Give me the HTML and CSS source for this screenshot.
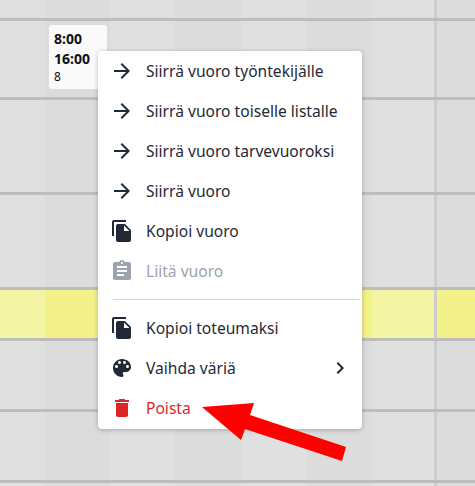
FILE: index.html
```html
<!DOCTYPE html>
<html lang="en">

<head>
    <meta charset="UTF-8">
    <meta name="viewport" content="width=device-width, initial-scale=1.0">
    <title>Vuorot</title>
    <link rel="stylesheet" href="styles.css">
</head>

<body>
    <div class="board">
        <div class="row"><div></div><div></div><div></div><div></div><div></div><div></div><div></div><div></div></div>
        <div class="row">
            <div></div>
            <div class="slot">
                <div class="shift">
                    <b>8:00</b>
                    <b>16:00</b>
                    <span>8</span>
                </div>
            </div>
            <div></div><div></div><div></div><div></div><div></div><div></div>
        </div>
        <div class="row"><div></div><div></div><div></div><div></div><div></div><div></div><div></div><div></div></div>
        <div class="row"><div></div><div></div><div></div><div></div><div></div><div></div><div></div><div></div></div>
        <div class="row today"><div></div><div></div><div></div><div></div><div></div><div></div><div></div><div></div></div>
        <div class="row"><div></div><div></div><div></div><div></div><div></div><div></div><div></div><div></div></div>
        <div class="row"><div></div><div></div><div></div><div></div><div></div><div></div><div></div><div></div></div>
        <div class="row"><div></div><div></div><div></div><div></div><div></div><div></div><div></div><div></div></div>

        <ul class="menu">
            <li class="item">
                <svg class="icon" viewBox="0 0 24 24"><path d="M12 4l-1.41 1.41L16.17 11H4v2h12.17l-5.58 5.59L12 20l8-8z"/></svg>
                <span class="label">Siirrä vuoro työntekijälle</span>
            </li>
            <li class="item">
                <svg class="icon" viewBox="0 0 24 24"><path d="M12 4l-1.41 1.41L16.17 11H4v2h12.17l-5.58 5.59L12 20l8-8z"/></svg>
                <span class="label">Siirrä vuoro toiselle listalle</span>
            </li>
            <li class="item">
                <svg class="icon" viewBox="0 0 24 24"><path d="M12 4l-1.41 1.41L16.17 11H4v2h12.17l-5.58 5.59L12 20l8-8z"/></svg>
                <span class="label">Siirrä vuoro tarvevuoroksi</span>
            </li>
            <li class="item">
                <svg class="icon" viewBox="0 0 24 24"><path d="M12 4l-1.41 1.41L16.17 11H4v2h12.17l-5.58 5.59L12 20l8-8z"/></svg>
                <span class="label">Siirrä vuoro</span>
            </li>
            <li class="item">
                <svg class="icon" viewBox="0 0 24 24"><path d="M16 1H4c-1.1 0-2 .9-2 2v14h2V3h12V1zm-1 4l6 6v10c0 1.1-.9 2-2 2H7.99C6.89 23 6 22.1 6 21l.01-14c0-1.1.89-2 1.99-2h7zm-1 7h5.5L14 6.5V12z"/></svg>
                <span class="label">Kopioi vuoro</span>
            </li>
            <li class="item disabled">
                <svg class="icon" viewBox="0 0 24 24"><path d="M19 3h-4.18C14.4 1.84 13.3 1 12 1c-1.3 0-2.4.84-2.82 2H5c-1.1 0-2 .9-2 2v14c0 1.1.9 2 2 2h14c1.1 0 2-.9 2-2V5c0-1.1-.9-2-2-2zm-7 0c.55 0 1 .45 1 1s-.45 1-1 1-1-.45-1-1 .45-1 1-1zm2 14H7v-2h7v2zm3-4H7v-2h10v2zm0-4H7V7h10v2z"/></svg>
                <span class="label">Liitä vuoro</span>
            </li>
            <li class="divider"></li>
            <li class="item">
                <svg class="icon" viewBox="0 0 24 24"><path d="M16 1H4c-1.1 0-2 .9-2 2v14h2V3h12V1zm-1 4l6 6v10c0 1.1-.9 2-2 2H7.99C6.89 23 6 22.1 6 21l.01-14c0-1.1.89-2 1.99-2h7zm-1 7h5.5L14 6.5V12z"/></svg>
                <span class="label">Kopioi toteumaksi</span>
            </li>
            <li class="item">
                <svg class="icon" viewBox="0 0 24 24"><path d="M12 3c-4.97 0-9 4.03-9 9s4.03 9 9 9c.83 0 1.5-.67 1.5-1.5 0-.39-.15-.74-.39-1.01-.23-.26-.38-.61-.38-.99 0-.83.67-1.5 1.5-1.5H16c2.76 0 5-2.24 5-5 0-4.42-4.03-8-9-8zm-5.5 9c-.83 0-1.5-.67-1.5-1.5S5.67 9 6.5 9 8 9.67 8 10.5 7.33 12 6.5 12zm3-4C8.67 8 8 7.33 8 6.5S8.67 5 9.5 5s1.5.67 1.5 1.5S10.33 8 9.5 8zm5 0c-.83 0-1.5-.67-1.5-1.5S13.67 5 14.5 5s1.5.67 1.5 1.5S15.33 8 14.5 8zm3 4c-.83 0-1.5-.67-1.5-1.5S16.67 9 17.5 9s1.5.67 1.5 1.5-.67 1.5-1.5 1.5z"/></svg>
                <span class="label">Vaihda väriä</span>
                <svg class="icon more" viewBox="0 0 24 24"><path d="M10 6L8.59 7.41 13.17 12l-4.58 4.59L10 18l6-6z"/></svg>
            </li>
            <li class="item danger">
                <svg class="icon" viewBox="0 0 24 24"><path d="M6 19c0 1.1.9 2 2 2h8c1.1 0 2-.9 2-2V7H6v12zM19 4h-3.5l-1-1h-5l-1 1H5v2h14V4z"/></svg>
                <span class="label">Poista</span>
            </li>
        </ul>

        <svg class="pointer" viewBox="0 0 475 486">
            <polygon points="202,407 254,403 250,415 346,447 342,461 245,429 241,440"/>
        </svg>
    </div>
</body>

</html>
```

FILE: styles.css
```css
* {
    padding: 0;
    margin: 0;
    box-sizing: border-box;
}

body {
    font-family: "Noto Sans", sans-serif;
    background-color: #e0e0e0;
    overflow: hidden;
}

.board {
    position: relative;
    width: 475px;
    height: 486px;
    display: grid;
    grid-template-rows: 21px 79px 95px 95px 51px 71px 71px 3px;
}

.row {
    display: grid;
    grid-template-columns: 45px 65px 65px 66px 66px 65px 62px 1fr;
    border-bottom: 3px solid #bdbdbd;
    background-color: #e0e0e0;
}

.row:nth-child(8) {
    border-bottom: none;
}

.row > :nth-child(even) {
    background-color: #dcdcdc;
}

.row > :last-child {
    border-left: 3px solid #cdcdcd;
}

.today {
    background-color: #f4f4a5;
}

.today > :nth-child(even) {
    background-color: #f3f18a;
}

.slot {
    padding: 4px 3px 4px 4px;
}

.shift {
    height: 64px;
    padding: 4px 5px;
    display: flex;
    flex-direction: column;
    background-color: #fafafa;
    border-radius: 3px;
    color: #111;
}

.shift b {
    font-size: 14px;
    line-height: 20px;
}

.shift span {
    font-size: 12px;
    line-height: 16px;
}

.menu {
    position: absolute;
    top: 51px;
    left: 98px;
    width: 264px;
    height: 378px;
    list-style: none;
    background-color: white;
    border-radius: 4px;
    box-shadow: 0 1px 5px rgba(0, 0, 0, 0.25);
}

.item {
    display: flex;
    align-items: center;
    gap: 12px;
    height: 40px;
    padding-left: 12px;
    font-size: 15.6px;
    color: #1f2937;
}

.label {
    margin-bottom: 1px;
}

.icon {
    width: 24px;
    height: 24px;
    flex-shrink: 0;
    fill: currentColor;
}

.more {
    margin-left: auto;
    margin-right: 10px;
}

.disabled {
    color: #9ca3af;
}

.danger {
    color: #dc2626;
}

.divider {
    height: 1px;
    margin: 8px 2px 8px 15px;
    background-color: #d1d5db;
}

.pointer {
    position: absolute;
    top: 0;
    left: 0;
    width: 475px;
    height: 486px;
    fill: #ff0000;
}
```
